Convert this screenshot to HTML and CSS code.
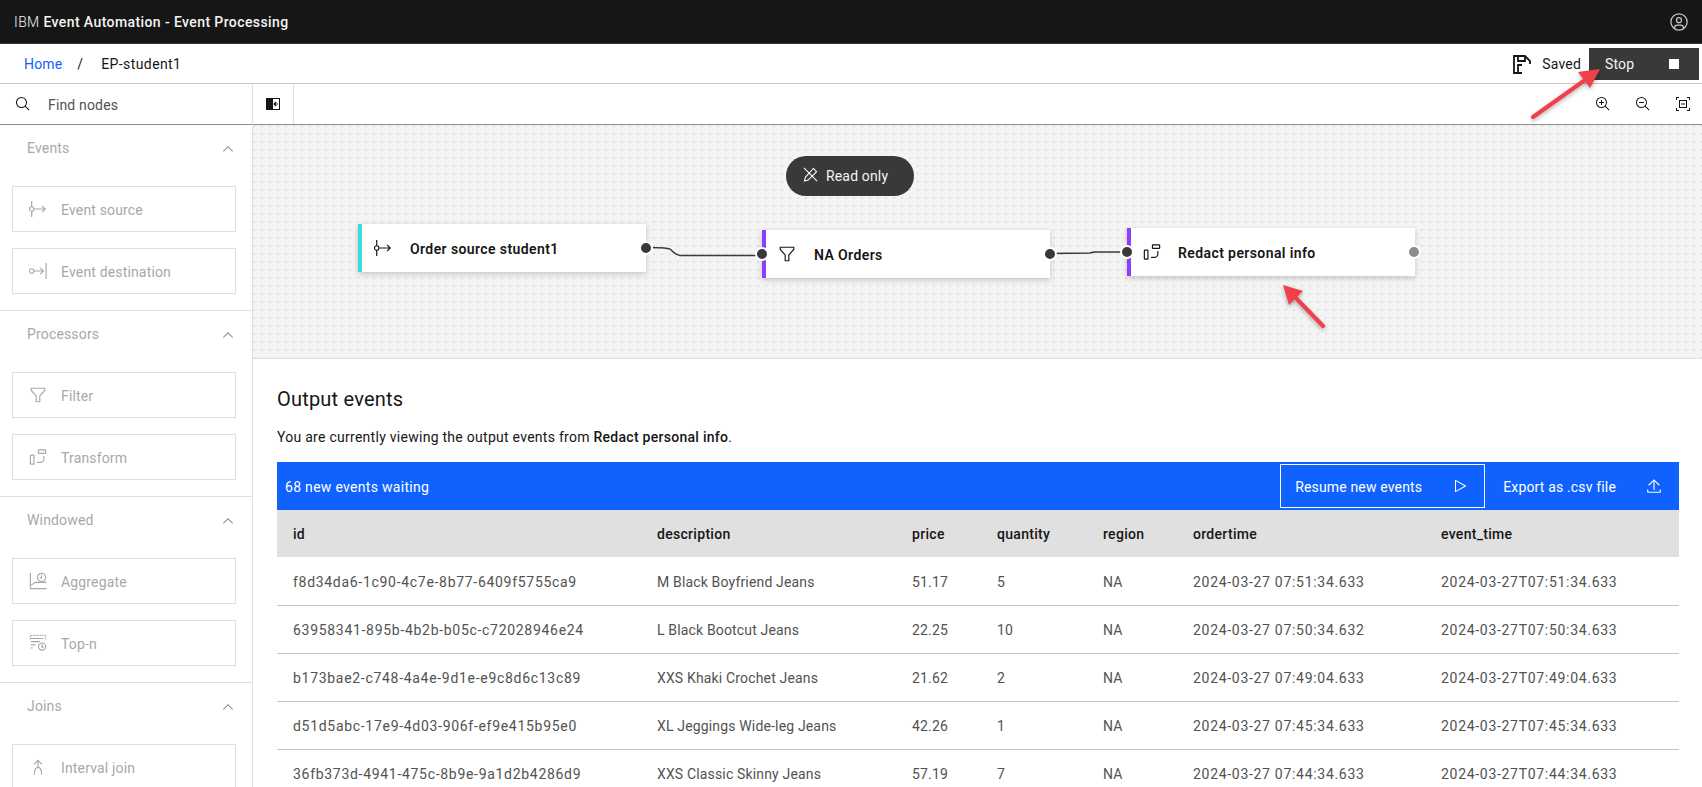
FILE: index.html
```html
<!DOCTYPE html>
<html lang="en">

<head>
  <meta charset="UTF-8"/>
  <title>IBM Event Automation - Event Processing</title>
  <link rel="stylesheet" href="styles.css">
</head>

<body>
<header class="top-bar">
  <div class="brand">IBM <b>Event Automation - Event Processing</b></div>
  <svg class="icon-user" viewBox="0 0 32 32"><path d="M16,8a5,5,0,1,0,5,5A5,5,0,0,0,16,8Zm0,8a3,3,0,1,1,3-3A3.0034,3.0034,0,0,1,16,16Z"/><path d="M16,2A14,14,0,1,0,30,16,14.0158,14.0158,0,0,0,16,2ZM10,26.3765V25a3.0033,3.0033,0,0,1,3-3h6a3.0033,3.0033,0,0,1,3,3v1.3765a11.8989,11.8989,0,0,1-12,0Zm13.9925-1.4507A5.0016,5.0016,0,0,0,19,20H13a5.0016,5.0016,0,0,0-4.9925,4.9258,12,12,0,1,1,15.985,0Z"/></svg>
</header>

<nav class="crumb-bar">
  <a class="crumb-home">Home</a>
  <span class="crumb-sep">/</span>
  <span class="crumb-name">EP-student1</span>
  <div class="crumb-actions">
    <svg class="icon-save" viewBox="0 0 20 20"><path d="M10 19H2V2h11l5 5v3"/><path d="M6 2v5h7V2M6 19v-8h4"/></svg>
    <span class="saved">Saved</span>
    <button class="stop-btn">Stop <span class="stop-square"></span></button>
  </div>
</nav>

<main class="workspace">
  <aside class="sidebar">
    <div class="search">
      <svg class="icon16" viewBox="0 0 32 32"><path d="M29,27.5859l-7.5521-7.5521a11.0177,11.0177,0,1,0-1.4141,1.4141L27.5859,29ZM4,13a9,9,0,1,1,9,9A9.01,9.01,0,0,1,4,13Z"/></svg>
      <span class="label">Find nodes</span>
    </div>

    <section class="group">
      <div class="group-title">Events <svg class="chevron" viewBox="0 0 32 32"><path d="M16 10L26 20 24.6 21.4 16 12.8 7.4 21.4 6 20z"/></svg></div>
      <div class="tile">
        <svg class="tile-icon" viewBox="0 0 20 20"><path d="M3 1v6.500M3 12.500V19M6 10h12M14.500 6.500L18 10l-3.500 3.500"/><circle cx="3" cy="10" r="2.500"/></svg>
        <span class="label">Event source</span>
      </div>
      <div class="tile">
        <svg class="tile-icon" viewBox="0 0 20 20"><circle cx="3" cy="10" r="2.500"/><path d="M5.500 10H16M12.500 6.500L16 10l-3.500 3.500M19 1v18"/></svg>
        <span class="label">Event destination</span>
      </div>
    </section>

    <section class="group">
      <div class="group-title">Processors <svg class="chevron" viewBox="0 0 32 32"><path d="M16 10L26 20 24.6 21.4 16 12.8 7.4 21.4 6 20z"/></svg></div>
      <div class="tile">
        <svg class="tile-icon" viewBox="0 0 20 20"><path d="M2.500 2.500h15v2.500L12 11v6.500H8V11L2.500 5z"/></svg>
        <span class="label">Filter</span>
      </div>
      <div class="tile">
        <svg class="tile-icon" viewBox="0 0 20 20"><rect x="1.500" y="8" width="4" height="10" rx=".5"/><rect x="10.500" y="2" width="8" height="4" rx=".5"/><path d="M16.500 9v3a4 4 0 0 1-4 4H9"/></svg>
        <span class="label">Transform</span>
      </div>
    </section>

    <section class="group">
      <div class="group-title">Windowed <svg class="chevron" viewBox="0 0 32 32"><path d="M16 10L26 20 24.6 21.4 16 12.8 7.4 21.4 6 20z"/></svg></div>
      <div class="tile">
        <svg class="tile-icon" viewBox="0 0 20 20"><path d="M1.500 1v17.500h18M1.500 14.500c3 0 3.500-3 6-3h12"/><circle cx="14" cy="6" r="4.500"/><path d="M14 3.500V6.500h-2"/></svg>
        <span class="label">Aggregate</span>
      </div>
      <div class="tile">
        <svg class="tile-icon" viewBox="0 0 20 20"><path class="dash" d="M1.500 6V1.500h17V6"/><path d="M2 5h14M2 8.500h10M2 12h5M2 15.500h2"/><circle cx="14.500" cy="14" r="4"/><path d="M14.500 11.500v3h2"/></svg>
        <span class="label">Top-n</span>
      </div>
    </section>

    <section class="group">
      <div class="group-title">Joins <svg class="chevron" viewBox="0 0 32 32"><path d="M16 10L26 20 24.6 21.4 16 12.8 7.4 21.4 6 20z"/></svg></div>
      <div class="tile">
        <svg class="tile-icon" viewBox="0 0 20 20"><path d="M5.500 7L10 2.500 14.500 7M6 18.500c0-5 1-8 4-8s4 3 4 8M10 3v7"/></svg>
        <span class="label">Interval join</span>
      </div>
    </section>
  </aside>

  <div class="content">
    <div class="toolbar">
      <button class="panel-btn">
        <svg class="icon16" viewBox="0 0 16 16"><path d="M1 2h7v12H1zM8 2h7v12H8V13h6V3H8z"/><path d="M9 8h4M9 8l2-2M9 8l2 2" fill="none" stroke="#161616" stroke-width="1.200"/></svg>
      </button>
      <div class="zoom-btns">
        <svg class="icon16" viewBox="0 0 32 32"><path d="M18 12L14 12 14 8 12 8 12 12 8 12 8 14 12 14 12 18 14 18 14 14 18 14 18 12z"/><path d="M21.4479,20A10.856,10.856,0,0,0,24,13,11,11,0,1,0,13,24a10.856,10.856,0,0,0,7-2.5521L27.5859,29,29,27.5859ZM13,22a9,9,0,1,1,9-9A9.01,9.01,0,0,1,13,22Z"/></svg>
        <svg class="icon16" viewBox="0 0 32 32"><path d="M8 12H18V14H8z"/><path d="M21.4479,20A10.856,10.856,0,0,0,24,13,11,11,0,1,0,13,24a10.856,10.856,0,0,0,7-2.5521L27.5859,29,29,27.5859ZM13,22a9,9,0,1,1,9-9A9.01,9.01,0,0,1,13,22Z"/></svg>
        <svg class="icon16" viewBox="0 0 32 32"><path d="M2 2h6v2H4v4H2zM24 2h6v6h-2V4h-4zM2 24h2v4h4v2H2zM28 24h2v6h-6v-2h4z"/><path d="M8 8h16v16H8zm2 2v12h12V10z"/><path d="M12 15h8v2h-8z"/></svg>
      </div>
    </div>

    <div class="canvas">
      <div class="read-only">
        <svg class="icon-pencil" viewBox="0 0 16 16"><path d="M1 1l14 14M11 1.500l3.500 3.500-9 9-4 1 1-4z"/></svg>
        Read only
      </div>

      <svg class="wires" viewBox="0 0 1449 233">
        <path d="M393 122.500c20 0 18 .5 24 1.500 4 4 6 6 10 6.500h82"/>
        <path d="M797 128.500l40-.5 4-1h33"/>
      </svg>

      <div class="node node-source">
        <svg class="node-icon" viewBox="0 0 20 20"><path d="M3 1v6.500M3 12.500V19M6 10h12M14.500 6.500L18 10l-3.500 3.500"/><circle cx="3" cy="10" r="2.500"/></svg>
        <span class="label">Order source student1</span>
        <span class="port port-out"></span>
      </div>
      <div class="node node-filter">
        <svg class="node-icon" viewBox="0 0 20 20"><path d="M2.500 2.500h15v2.500L12 11v6.500H8V11L2.500 5z"/></svg>
        <span class="label">NA Orders</span>
        <span class="port port-in"></span>
        <span class="port port-out"></span>
      </div>
      <div class="node node-redact">
        <svg class="node-icon" viewBox="0 0 20 20"><rect x="1.500" y="8" width="4" height="10" rx=".5"/><rect x="10.500" y="2" width="8" height="4" rx=".5"/><path d="M16.500 9v3a4 4 0 0 1-4 4H9"/></svg>
        <span class="label">Redact personal info</span>
        <span class="port port-in"></span>
        <span class="port port-out port-idle"></span>
      </div>
    </div>

    <section class="output">
      <h2>Output events</h2>
      <p>You are currently viewing the output events from <b>Redact personal info</b>.</p>

      <div class="events-bar">
        <span class="events-waiting label">68 new events waiting</span>
        <button class="resume-btn"><span class="label">Resume new events</span>
          <svg class="icon16 light" viewBox="0 0 32 32"><path d="M7,28a1,1,0,0,1-1-1V5a1,1,0,0,1,1.4819-.8763l20,11a1,1,0,0,1,0,1.7525l-20,11A1.0005,1.0005,0,0,1,7,28ZM8,6.6909V25.3088L24.9248,16Z"/></svg>
        </button>
        <button class="export-btn"><span class="label">Export as .csv file</span>
          <svg class="icon16 light" viewBox="2 4 28 28"><path d="M6 16L7.410 17.410 15 9.830 15 25 17 25 17 9.830 24.590 17.410 26 16 16 6z"/><path d="M4 24h2v4h20v-4h2v4a2 2 0 0 1-2 2H6a2 2 0 0 1-2-2z"/></svg>
        </button>
      </div>

      <table class="events">
        <colgroup>
          <col class="col-id"><col class="col-desc"><col class="col-price"><col class="col-qty"><col class="col-region"><col class="col-order"><col class="col-time">
        </colgroup>
        <thead>
          <tr><th>id</th><th>description</th><th>price</th><th>quantity</th><th>region</th><th>ordertime</th><th>event_time</th></tr>
        </thead>
        <tbody>
          <tr><td>f8d34da6-1c90-4c7e-8b77-6409f5755ca9</td><td>M Black Boyfriend Jeans</td><td>51.17</td><td>5</td><td>NA</td><td>2024-03-27 07:51:34.633</td><td>2024-03-27T07:51:34.633</td></tr>
          <tr><td>63958341-895b-4b2b-b05c-c72028946e24</td><td>L Black Bootcut Jeans</td><td>22.25</td><td>10</td><td>NA</td><td>2024-03-27 07:50:34.632</td><td>2024-03-27T07:50:34.633</td></tr>
          <tr><td>b173bae2-c748-4a4e-9d1e-e9c8d6c13c89</td><td>XXS Khaki Crochet Jeans</td><td>21.62</td><td>2</td><td>NA</td><td>2024-03-27 07:49:04.633</td><td>2024-03-27T07:49:04.633</td></tr>
          <tr><td>d51d5abc-17e9-4d03-906f-ef9e415b95e0</td><td>XL Jeggings Wide-leg Jeans</td><td>42.26</td><td>1</td><td>NA</td><td>2024-03-27 07:45:34.633</td><td>2024-03-27T07:45:34.633</td></tr>
          <tr><td>36fb373d-4941-475c-8b9e-9a1d2b4286d9</td><td>XXS Classic Skinny Jeans</td><td>57.19</td><td>7</td><td>NA</td><td>2024-03-27 07:44:34.633</td><td>2024-03-27T07:44:34.633</td></tr>
        </tbody>
      </table>
    </section>
  </div>
</main>

<!-- annotation arrows drawn over the screenshot -->
<svg class="arrows" viewBox="0 0 1702 787">
  <path d="M1533 117L1585 80"/>
  <path class="head" d="M1600 69L1578 72L1590 88z"/>
  <path d="M1323 326L1293 295"/>
  <path class="head" d="M1283 285L1303 291L1289 305z"/>
</svg>
</body>

</html>
```

FILE: styles.css
```css
* {
  box-sizing: border-box;
}

html, body {
  height: 787px;
  margin: 0;
  overflow: hidden;
}

body {
  background: white;
  color: #161616;
  font-family: Roboto, 'Noto Sans', sans-serif;
  font-size: 14px;
  letter-spacing: 0.16px;
  display: flex;
  flex-direction: column;
  position: relative;
}

button {
  font: inherit;
  letter-spacing: inherit;
  border: none;
  color: inherit;
  background: none;
  padding: 0;
}

svg {
  flex: none;
}

.icon16 {
  width: 16px;
  height: 16px;
  fill: #161616;
}

.icon16.light {
  fill: white;
}

.label {
  padding-top: 2px;
}

/* top bar */
.top-bar {
  height: 44px;
  flex: none;
  background: #161616;
  border-bottom: 1px solid #393939;
  color: #f4f4f4;
  display: flex;
  align-items: center;
  justify-content: space-between;
  padding: 0 14px;
}

.brand {
  font-weight: 300;
  letter-spacing: 0.4px;
}

.brand b {
  font-weight: 500;
}

.icon-user {
  width: 20px;
  height: 20px;
  fill: #c6c6c6;
  margin-right: -1px;
}

/* breadcrumb */
.crumb-bar {
  height: 40px;
  flex: none;
  border-bottom: 1px solid #c6c6c6;
  display: flex;
  align-items: center;
  padding: 0 3px 0 24px;
}

.crumb-home {
  color: #0f62fe;
}

.crumb-sep {
  margin: 0 18px 0 15px;
}

.crumb-name {
  letter-spacing: 0.4px;
}

.crumb-actions {
  margin-left: auto;
  display: flex;
  align-items: center;
}

.icon-save {
  width: 20px;
  height: 20px;
  fill: none;
  stroke: #161616;
  stroke-width: 1.8;
  margin-right: 10px;
}

.saved {
  margin-right: 8px;
}

.stop-btn {
  width: 110px;
  height: 32px;
  background: #393939;
  color: #f4f4f4;
  display: flex;
  align-items: center;
  justify-content: space-between;
  padding: 0 20px 0 16px;
}

.stop-square {
  width: 10px;
  height: 10px;
  background: white;
}

/* layout */
.workspace {
  flex: 1;
  min-height: 0;
  display: grid;
  grid-template-columns: 253px 1fr;
}

/* sidebar */
.sidebar {
  border-right: 1px solid #e0e0e0;
  overflow: hidden;
}

.search {
  height: 41px;
  border-bottom: 1px solid #8d8d8d;
  display: flex;
  align-items: center;
  gap: 17px;
  padding-left: 15px;
  color: #525252;
}

.group {
  padding: 0 16px 16px 12px;
  border-bottom: 1px solid #e0e0e0;
}

.group-title {
  height: 46px;
  color: #a8a8a8;
  display: flex;
  align-items: center;
  justify-content: space-between;
  padding: 0 0 0 15px;
  margin-bottom: 15px;
}

.chevron {
  width: 16px;
  height: 16px;
  fill: #8d8d8d;
  margin-top: 2px;
}

.tile {
  height: 46px;
  border: 1px solid #e0e0e0;
  color: #a8a8a8;
  display: flex;
  align-items: center;
  gap: 14px;
  padding-left: 16px;
  margin-bottom: 16px;
}

.tile:last-child {
  margin-bottom: 0;
}

.tile-icon, .node-icon {
  width: 18px;
  height: 18px;
  fill: none;
  stroke: #a8a8a8;
  stroke-width: 1.3;
}

.tile-icon .dash {
  stroke-dasharray: 1.500 1;
}

/* canvas */
.toolbar {
  height: 41px;
  border-bottom: 1px solid #8d8d8d;
  display: flex;
  align-items: center;
  justify-content: space-between;
}

.panel-btn {
  width: 41px;
  height: 40px;
  border-right: 1px solid #e0e0e0;
  display: flex;
  align-items: center;
  justify-content: center;
}

.zoom-btns {
  display: flex;
  gap: 24px;
  padding-right: 11px;
}

.canvas {
  height: 234px;
  position: relative;
  background-color: #f4f4f4;
  background-image: radial-gradient(circle, #e0e0e0 0.9px, transparent 1.1px);
  background-size: 8px 8px;
  background-position: 5px -3px;
  border-bottom: 1px solid #e0e0e0;
}

.read-only {
  position: absolute;
  left: 533px;
  top: 31px;
  width: 128px;
  height: 40px;
  border-radius: 20px;
  background: #393939;
  color: #f4f4f4;
  display: flex;
  align-items: center;
  gap: 8px;
  padding-left: 17px;
}

.icon-pencil {
  width: 15px;
  height: 15px;
  margin-top: -3px;
  fill: none;
  stroke: white;
  stroke-width: 1.1;
}

.wires {
  position: absolute;
  left: 0;
  top: 0;
  width: 1449px;
  height: 233px;
  fill: none;
  stroke: #393939;
  stroke-width: 1.300;
}

.node {
  position: absolute;
  width: 288px;
  height: 48px;
  background: white;
  border-left: 4px solid #8a3ffc;
  box-shadow: 0 2px 6px rgba(0, 0, 0, 0.2);
  font-weight: 600;
  letter-spacing: 0.4px;
  display: flex;
  align-items: center;
  gap: 17px;
  padding-left: 12px;
}

.node-icon {
  stroke: #161616;
}

.node-source {
  left: 105px;
  top: 99px;
  border-left-color: #3ddbd9;
  gap: 18px;
}

.node-filter {
  left: 509px;
  top: 105px;
  gap: 18px;
}

.node-redact {
  left: 874px;
  top: 103px;
}

.port {
  position: absolute;
  width: 14px;
  height: 14px;
  top: 17px;
  border-radius: 50%;
  background: #393939;
  border: 2px solid white;
  padding: 0;
}

.port-out {
  right: -7px;
}

.port-in {
  left: -11px;
  top: 17px;
}

.port-idle {
  background: #8d8d8d;
  right: -6px;
}

/* output events */
.output {
  padding: 0 23px 0 24px;
}

.output h2 {
  margin: 0;
  padding-top: 26px;
  font-size: 20px;
  line-height: 28px;
  font-weight: 400;
  letter-spacing: 0.2px;
}

.output p {
  margin: 14px 0 0;
  line-height: 20px;
  letter-spacing: 0.27px;
}

.output p b {
  font-weight: 500;
}

.events-bar {
  margin-top: 15px;
  height: 48px;
  background: #0f62fe;
  color: white;
  display: flex;
  align-items: center;
  padding: 0 17px 0 8px;
}

.events-waiting {
  margin-right: auto;
  letter-spacing: 0.3px;
}

.resume-btn {
  width: 205px;
  height: 44px;
  border: 1px solid white;
  display: flex;
  align-items: center;
  justify-content: space-between;
  padding: 0 16px 0 14px;
}

.export-btn {
  display: flex;
  align-items: center;
  gap: 30px;
  margin-left: 18px;
}

.events {
  width: 100%;
  table-layout: fixed;
  border-collapse: collapse;
}

.col-id { width: 364px; }
.col-desc { width: 255px; }
.col-price { width: 85px; }
.col-qty { width: 106px; }
.col-region { width: 90px; }
.col-order { width: 248px; }

.events th {
  height: 47px;
  background: #e0e0e0;
  text-align: left;
  font-weight: 500;
  padding-left: 16px;
  letter-spacing: 0.3px;
}

.events td {
  height: 48px;
  color: #525252;
  padding: 2px 0 0 16px;
  border-bottom: 1px solid #c6c6c6;
}

/* the ids and timestamps run wider than the other cells */
.events td:nth-child(1),
.events td:nth-child(6),
.events td:nth-child(7) {
  letter-spacing: 0.7px;
}

/* annotations */
.arrows {
  position: absolute;
  left: 0;
  top: 0;
  width: 1702px;
  height: 787px;
  pointer-events: none;
  fill: none;
  stroke: #f0404a;
  stroke-width: 4;
  stroke-linecap: round;
  filter: drop-shadow(0 2px 2px rgba(0, 0, 0, 0.3));
}

.arrows .head {
  fill: #f0404a;
  stroke: none;
}
```
